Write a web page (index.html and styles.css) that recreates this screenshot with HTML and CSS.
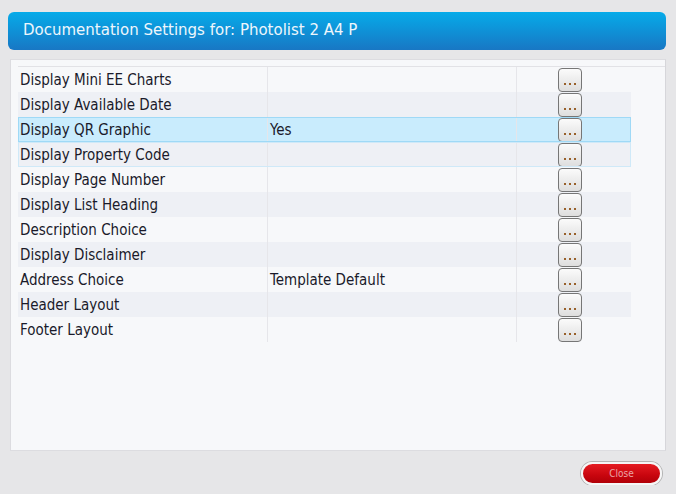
FILE: index.html
```html
<!DOCTYPE html>
<html lang="en">
<head>
	<meta charset="UTF-8">
	<title>Documentation Settings</title>
	<link rel="stylesheet" href="styles.css">
</head>
<body>
	<div class="dialog-title">Documentation Settings for: Photolist 2 A4 P</div>

	<div class="dialog-body">
		<div class="grid-wrap">
			<table class="settings-grid">
				<tr><td>Display Mini EE Charts</td><td></td><td><button class="dots"><i></i><i></i><i></i></button></td></tr>
				<tr><td>Display Available Date</td><td></td><td><button class="dots"><i></i><i></i><i></i></button></td></tr>
				<tr class="selected"><td>Display QR Graphic</td><td>Yes</td><td><button class="dots"><i></i><i></i><i></i></button></td></tr>
				<tr class="hover"><td>Display Property Code</td><td></td><td><button class="dots"><i></i><i></i><i></i></button></td></tr>
				<tr><td>Display Page Number</td><td></td><td><button class="dots"><i></i><i></i><i></i></button></td></tr>
				<tr><td>Display List Heading</td><td></td><td><button class="dots"><i></i><i></i><i></i></button></td></tr>
				<tr><td>Description Choice</td><td></td><td><button class="dots"><i></i><i></i><i></i></button></td></tr>
				<tr><td>Display Disclaimer</td><td></td><td><button class="dots"><i></i><i></i><i></i></button></td></tr>
				<tr><td>Address Choice</td><td>Template Default</td><td><button class="dots"><i></i><i></i><i></i></button></td></tr>
				<tr><td>Header Layout</td><td></td><td><button class="dots"><i></i><i></i><i></i></button></td></tr>
				<tr><td>Footer Layout</td><td></td><td><button class="dots"><i></i><i></i><i></i></button></td></tr>
			</table>
		</div>
	</div>

	<div class="dialog-footer">
		<button class="close-btn">Close</button>
	</div>
</body>
</html>
```

FILE: styles.css
```css
body {
	margin: 0;
	padding: 12px 10px 0 8px;
	background-color: #e6e6e8;
	font-family: 'DejaVu Sans Condensed', 'DejaVu Sans', sans-serif;
	color: #1a1a2a;
}
.dialog-title {
	height: 38px;
	line-height: 37px;
	padding-left: 15px;
	border-radius: 6px;
	background: linear-gradient(#06abe9, #1877c4);
	color: #eef6fc;
	font-family: 'DejaVu Sans', sans-serif;
	font-size: 15px;
}
.dialog-body {
	margin: 9px 0 0 2px;
	height: 384px;
	padding: 6px 0 0 7px;
	background-color: #f7f8fa;
	border: 1px solid #dcdce0;
	border-right: 1px solid #d6d6da;
}
.grid-wrap {
	border-top: 1px solid #e2e2e6;
}
.settings-grid {
	width: 613px;
	border-collapse: collapse;
	font-size: 15px;
}
.settings-grid td {
	height: 25px;
	padding: 0 0 0 2px;
	border-right: 1px solid #e6e6ea;
	vertical-align: middle;
}
.settings-grid td:nth-child(1) {
	width: 247px;
}
.settings-grid td:nth-child(2) {
	width: 246px;
}
.settings-grid td:nth-child(3) {
	padding-left: 41px;
	border-right: none;
}
.settings-grid tr:nth-child(even) {
	background-color: #eef0f5;
}
.settings-grid tr.selected {
	background-color: #c9ecfd;
	outline: 1px solid #9fd9f6;
	outline-offset: -1px;
}
.settings-grid tr.hover {
	outline: 1px solid #cfe9f8;
	outline-offset: -1px;
}
/* the "..." picker button, three small dots low in the box */
.dots {
	display: flex;
	justify-content: center;
	align-items: flex-end;
	gap: 3px;
	width: 24px;
	height: 24px;
	padding: 0 0 6px;
	border: 1px solid #767676;
	border-radius: 4px;
	background: linear-gradient(#fbfbfb, #dedede);
	cursor: pointer;
}
.dots i {
	width: 2px;
	height: 2px;
	background-color: #98602a;
}
.dialog-footer {
	display: flex;
	justify-content: flex-end;
	padding: 11px 4px 0 0;
}
.close-btn {
	width: 81px;
	height: 23px;
	border: 2px solid #f6f6f6;
	border-radius: 12px;
	box-shadow: 0 0 0 1px #b4b4b4;
	background: linear-gradient(#e51c22, #c8050e 60%, #b10008);
	color: #eaa4a6;
	font-family: 'DejaVu Sans Condensed', sans-serif;
	font-size: 10px;
	cursor: pointer;
}
```
